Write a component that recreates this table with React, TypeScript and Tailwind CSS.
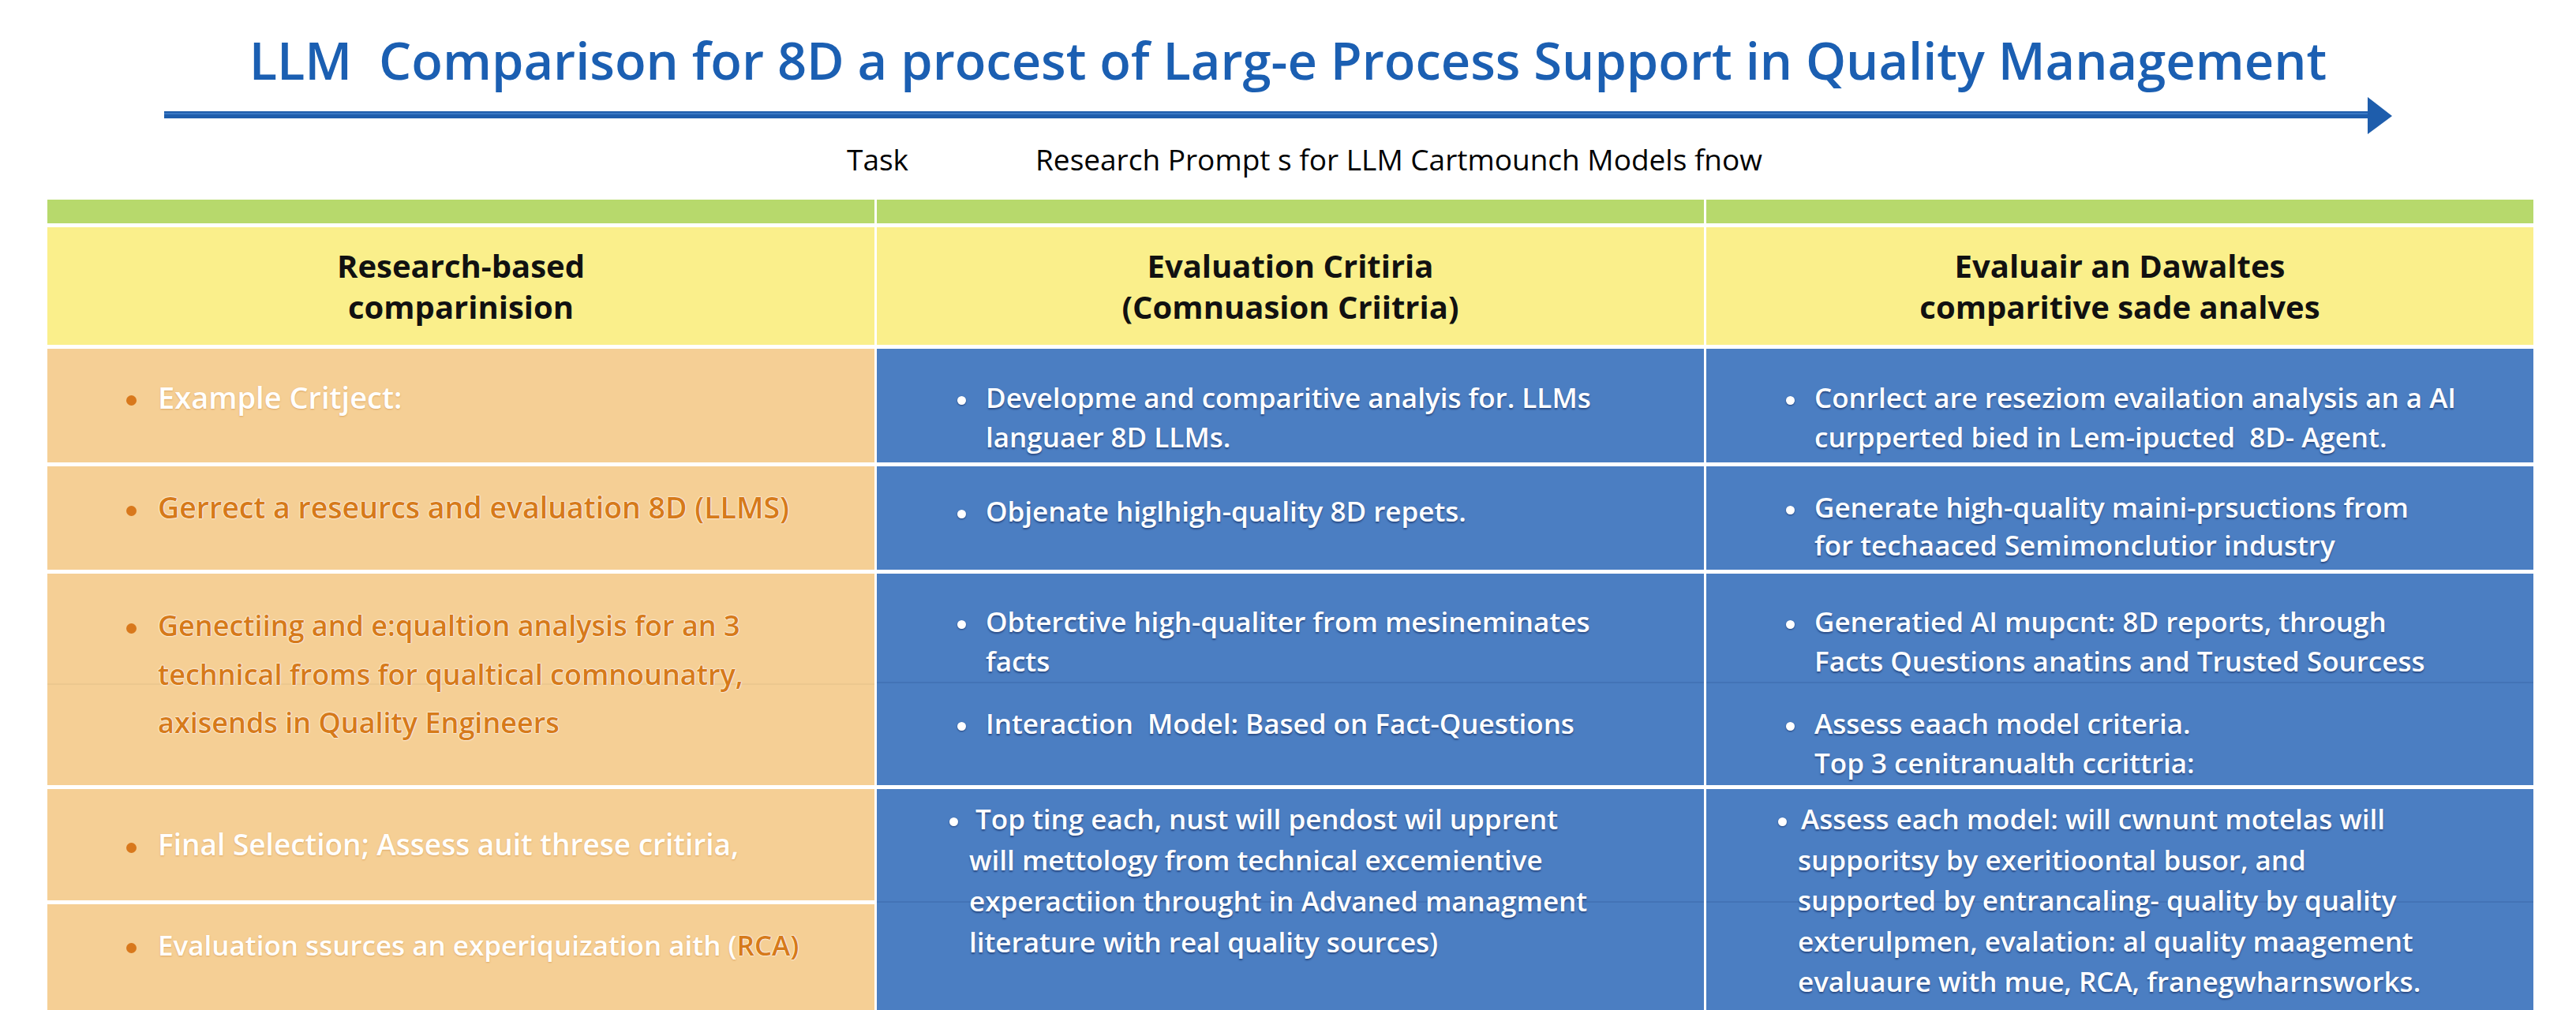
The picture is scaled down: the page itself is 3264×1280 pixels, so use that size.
import React from 'react'
import clsx from 'clsx'

type DotKind = 'orange' | 'white'

interface BulletProps {
  dot: DotKind
  dotClass: string
  textClass: string
  lines: React.ReactNode[]
  className?: string
}

function Bullet({ dot, dotClass, textClass, lines, className }: BulletProps) {
  return (
    <div className={clsx('flex items-start', className)}>
      <span
        className={clsx(
          'shrink-0 rounded-full',
          dot === 'orange'
            ? 'w-[13px] h-[13px] mr-[27px] bg-[#d8781c]'
            : 'w-[11px] h-[11px] mr-[25px] bg-white shadow-[0_1px_2px_rgba(10,30,80,0.6)]',
          dotClass
        )}
      />
      <div className={textClass}>
        {lines.map((l, i) => (
          <div key={i} className="whitespace-pre">
            {l}
          </div>
        ))}
      </div>
    </div>
  )
}

const whiteOnPeach = 'text-white font-semibold [text-shadow:0_1px_2px_rgba(190,120,40,0.45)]'
const orangeOnPeach = 'text-[#d67a1a] font-semibold [text-shadow:0_0_2px_#fff,0_0_2px_#fff,0_0_1px_#fff]'
const whiteOnBlue = 'text-white font-semibold text-[35px] [text-shadow:0_2px_2px_rgba(15,35,85,0.55)]'

function HeaderCell({ lines }: { lines: string[] }) {
  return (
    <div className="bg-[#faef8b] flex flex-col items-center justify-center text-[40px] leading-[52px] font-bold text-[#111]">
      {lines.map((l) => (
        <div key={l}>{l}</div>
      ))}
    </div>
  )
}

export default function App() {
  return (
    <div className="w-[3264px] h-[1280px] overflow-hidden bg-white font-['Open_Sans',sans-serif]">
      <h1 className="pt-[44px] text-center text-[65px] leading-none font-semibold text-[#1b5fb2] whitespace-pre">
        LLM  Comparison for 8D a procest of Larg-e Process Support in Quality Management
      </h1>

      <div className="mt-[14px] pl-[208px]">
        <svg width="2830" height="48" viewBox="0 0 2830 48">
          <rect x="0" y="18" width="2796" height="9" fill="#1e5dac" />
          <rect x="0" y="20" width="2796" height="2" fill="#3a78c4" />
          <polygon points="2792,0 2823,24 2792,47" fill="#1e5dac" />
        </svg>
      </div>

      <div className="mt-[12px] pl-[1073px] flex gap-[161px] text-[37px] leading-none text-black">
        <span>Task</span>
        <span>Research Prompt s for LLM Cartmounch Models fnow</span>
      </div>

      <div className="mt-[33px] ml-[60px] w-[3150px] grid grid-cols-3 gap-x-[3px] gap-y-[5px] grid-rows-[30px_149px_144px_131px_268px_141px_140px] text-[33px]">
        {/* green strip */}
        <div className="bg-[#b7d96c]" />
        <div className="bg-[#b7d96c]" />
        <div className="bg-[#b7d96c]" />

        {/* headers */}
        <HeaderCell lines={['Research-based', 'comparinision']} />
        <HeaderCell lines={['Evaluation Critiria', '(Comnuasion Criitria)']} />
        <HeaderCell lines={['Evaluair an Dawaltes', 'comparitive sade analves']} />

        {/* row 1 */}
        <div className="bg-[#f5cf95] pt-[36px] pl-[100px]">
          <Bullet
            dot="orange"
            dotClass="mt-[23px]"
            textClass={clsx('leading-[50px] text-[38px]', whiteOnPeach)}
            lines={['Example Critject:']}
          />
        </div>
        <div className="bg-[#4b7ec2] pt-[37px] pl-[102px]">
          <Bullet
            dot="white"
            dotClass="mt-[23px]"
            textClass={clsx('leading-[50px]', whiteOnBlue)}
            lines={['Developme and comparitive analyis for. LLMs', 'languaer 8D LLMs.']}
          />
        </div>
        <div className="bg-[#4b7ec2] pt-[37px] pl-[101px]">
          <Bullet
            dot="white"
            dotClass="mt-[23px]"
            textClass={clsx('leading-[50px]', whiteOnBlue)}
            lines={['Conrlect are reseziom evailation analysis an a AI', 'curpperted bied in Lem-ipucted  8D- Agent.']}
          />
        </div>

        {/* row 2 */}
        <div className="bg-[#f5cf95] pt-[27px] pl-[100px]">
          <Bullet
            dot="orange"
            dotClass="mt-[23px]"
            textClass={clsx('leading-[50px] text-[37.5px]', orangeOnPeach)}
            lines={['Gerrect a reseurcs and evaluation 8D (LLMS)']}
          />
        </div>
        <div className="bg-[#4b7ec2] pt-[32px] pl-[102px]">
          <Bullet dot="white" dotClass="mt-[23px]" textClass={clsx('leading-[50px]', whiteOnBlue)} lines={['Objenate higlhigh-quality 8D repets.']} />
        </div>
        <div className="bg-[#4b7ec2] pt-[28px] pl-[101px]">
          <Bullet
            dot="white"
            dotClass="mt-[22px]"
            textClass={clsx('leading-[48px]', whiteOnBlue)}
            lines={['Generate high-quality maini-prsuctions from', 'for techaaced Semimonclutior industry']}
          />
        </div>

        {/* row 3 */}
        <div className="relative bg-[#f5cf95] pt-[35px] pl-[100px]">
          <div className="absolute left-0 right-0 top-[139px] h-[2px] bg-[#ecc88f]" />
          <Bullet
            dot="orange"
            dotClass="mt-[28px]"
            className="relative"
            textClass={clsx('leading-[61.5px] text-[36px]', orangeOnPeach)}
            lines={['Genectiing and e:qualtion analysis for an 3', 'technical froms for qualtical comnounatry,', 'axisends in Quality Engineers']}
          />
        </div>
        <div className="bg-[#4b7ec2] flex flex-col">
          <div className="h-[139px] shrink-0 border-b-2 border-[#4373b6] pt-[36px] pl-[102px]">
            <Bullet
              dot="white"
              dotClass="mt-[23px]"
              textClass={clsx('leading-[50px]', whiteOnBlue)}
              lines={['Obterctive high-qualiter from mesineminates', 'facts']}
            />
          </div>
          <div className="pt-[26px] pl-[102px]">
            <Bullet dot="white" dotClass="mt-[23px]" textClass={clsx('leading-[50px]', whiteOnBlue)} lines={['Interaction  Model: Based on Fact-Questions']} />
          </div>
        </div>
        <div className="bg-[#4b7ec2] flex flex-col">
          <div className="h-[139px] shrink-0 border-b-2 border-[#4373b6] pt-[36px] pl-[101px]">
            <Bullet
              dot="white"
              dotClass="mt-[23px]"
              textClass={clsx('leading-[50px]', whiteOnBlue)}
              lines={['Generatied AI mupcnt: 8D reports, through', 'Facts Questions anatins and Trusted Sourcess']}
            />
          </div>
          <div className="pt-[26px] pl-[101px]">
            <Bullet
              dot="white"
              dotClass="mt-[23px]"
              textClass={clsx('leading-[50px]', whiteOnBlue)}
              lines={['Assess eaach model criteria.', 'Top 3 cenitranualth ccrittria:']}
            />
          </div>
        </div>

        {/* row 4 */}
        <div className="bg-[#f5cf95] pt-[45px] pl-[100px]">
          <Bullet
            dot="orange"
            dotClass="mt-[23px]"
            textClass={clsx('leading-[50px] text-[37px]', whiteOnPeach)}
            lines={['Final Selection; Assess auit threse critiria,']}
          />
        </div>
        <div className="relative row-span-2 bg-[#4b7ec2] pt-[12px] pl-[92px]">
          <div className="absolute left-0 right-0 top-[142px] h-[2px] bg-[#4373b6]" />
          <div className={clsx('relative leading-[52px]', whiteOnBlue)}>
            <div className="flex items-start whitespace-pre">
              <span className="shrink-0 mt-[24px] mr-[22px] w-[11px] h-[11px] rounded-full bg-white shadow-[0_1px_2px_rgba(10,30,80,0.6)]" />
              Top ting each, nust will pendost wil upprent
            </div>
            <div className="pl-[25px] whitespace-pre">will mettology from technical excemientive</div>
            <div className="pl-[25px] whitespace-pre">experactiion throught in Advaned managment</div>
            <div className="pl-[25px] whitespace-pre">literature with real quality sources)</div>
          </div>
        </div>
        <div className="relative row-span-2 bg-[#4b7ec2] pt-[12px] pl-[91px]">
          <div className="absolute left-0 right-0 top-[142px] h-[2px] bg-[#4373b6]" />
          <div className={clsx('relative leading-[51.5px]', whiteOnBlue)}>
            <div className="flex items-start whitespace-pre">
              <span className="shrink-0 mt-[24px] mr-[18px] w-[11px] h-[11px] rounded-full bg-white shadow-[0_1px_2px_rgba(10,30,80,0.6)]" />
              Assess each model: will cwnunt motelas will
            </div>
            <div className="pl-[25px] whitespace-pre">supporitsy by exeritioontal busor, and</div>
            <div className="pl-[25px] whitespace-pre">supported by entrancaling- quality by quality</div>
            <div className="pl-[25px] whitespace-pre">exterulpmen, evalation: al quality maagement</div>
            <div className="pl-[25px] whitespace-pre">evaluaure with mue, RCA, franegwharnsworks.</div>
          </div>
        </div>

        {/* row 5 */}
        <div className="bg-[#f5cf95] pt-[27px] pl-[100px]">
          <Bullet
            dot="orange"
            dotClass="mt-[22px]"
            textClass={clsx('leading-[50px] text-[35px]', whiteOnPeach)}
            lines={[
              <>
                Evaluation ssurces an experiquization aith (<span className={orangeOnPeach}>RCA)</span>
              </>,
            ]}
          />
        </div>
      </div>
    </div>
  )
}
